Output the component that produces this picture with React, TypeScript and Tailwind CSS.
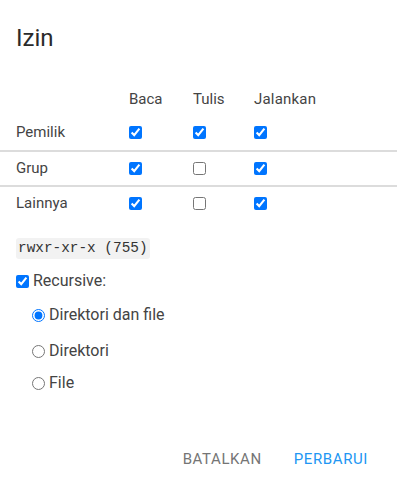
import { useState } from "react";

type Perm = { label: string; read: boolean; write: boolean; exec: boolean };

const ROWS: Perm[] = [
	{ label: "Pemilik", read: true, write: true, exec: true },
	{ label: "Grup", read: true, write: false, exec: true },
	{ label: "Lainnya", read: true, write: false, exec: true },
];

const MODES = ["Direktori dan file", "Direktori", "File"];

export default function App() {
	const [mode, setMode] = useState(MODES[0]);

	return (
		<div className="h-[498px] w-[397px] bg-white font-['Roboto',sans-serif] text-[#444]">
			<h2 className="px-4 pt-[22px] text-[24px] font-normal leading-[32px] text-[#2a2a2a]">
				Izin
			</h2>

			<div className="mt-[30px] text-[15px]">
				<div className="grid h-[31px] grid-cols-[129px_64px_61px_1fr] items-center">
					<span />
					<span>Baca</span>
					<span>Tulis</span>
					<span className="tracking-[0.2px]">Jalankan</span>
				</div>
				{ROWS.map((row, i) => (
					<div
						key={row.label}
						className={`grid h-[35px] grid-cols-[129px_64px_61px_1fr] items-center ${i > 0 ? "border-t-2 border-[#dcdcdc]" : ""}`}
					>
						<span className="pl-4">{row.label}</span>
						<input type="checkbox" defaultChecked={row.read} className="m-0 h-[13px] w-[13px]" />
						<input type="checkbox" defaultChecked={row.write} className="m-0 h-[13px] w-[13px]" />
						<input type="checkbox" defaultChecked={row.exec} className="m-0 h-[13px] w-[13px]" />
					</div>
				))}
			</div>

			<div className="px-4 pt-[15px]">
				<code className="inline-block rounded-[3px] bg-[#f2f2f2] px-[2px] font-['Liberation_Mono',monospace] text-[14.4px] leading-[21px] text-[#333]">
					rwxr-xr-x (755)
				</code>

				<label className="mt-[12px] flex h-[20px] items-center gap-[4px] text-[16px]">
					<input type="checkbox" defaultChecked className="m-0 h-[13px] w-[13px]" />
					Recursive:
				</label>

				<div className="mt-[14px] flex flex-col pl-[16px]">
					{MODES.map((m, i) => (
						<label
							key={m}
							className={`flex h-[20px] items-center gap-[4px] text-[16px] ${i === 1 ? "mt-[16px]" : i === 2 ? "mt-[12px]" : ""}`}
						>
							<input
								type="radio"
								name="mode"
								checked={mode === m}
								onChange={() => setMode(m)}
								className="m-0 h-[13px] w-[13px]"
							/>
							{m}
						</label>
					))}
				</div>
			</div>

			<div className="mt-[55px] flex justify-end gap-[32px] pr-[29px] text-[15px] text-[#757575]">
				<button className="uppercase tracking-[0.6px]">Batalkan</button>
				<button className="uppercase tracking-[0.6px] text-[#2196f3]">Perbarui</button>
			</div>
		</div>
	);
}
